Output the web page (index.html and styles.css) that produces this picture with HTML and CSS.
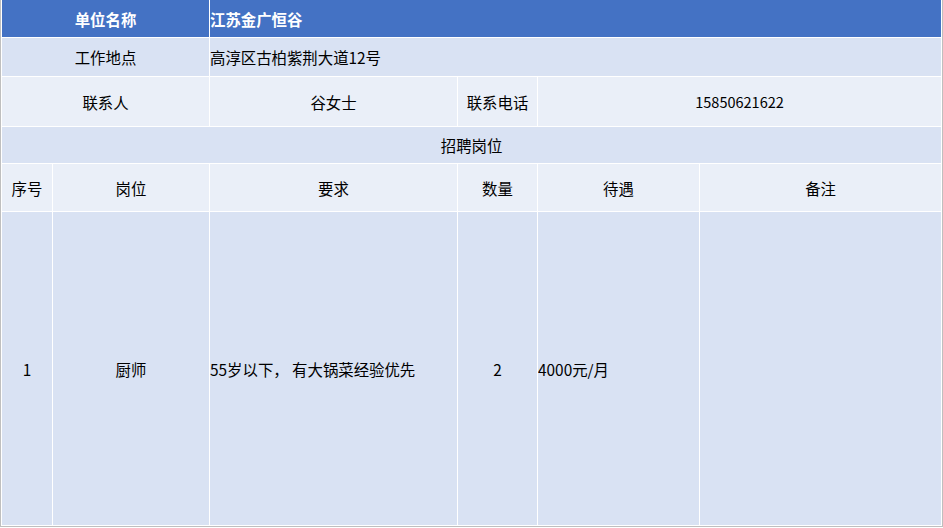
FILE: index.html
```html
<!DOCTYPE html>
<html lang="zh-CN">
<head>
<meta charset="utf-8">
<title>招聘信息</title>
<link rel="stylesheet" href="styles.css">
</head>
<body>
<table class="job">
  <colgroup>
    <col class="c1"><col class="c2"><col class="c3"><col class="c4"><col class="c5"><col class="c6">
  </colgroup>
  <tr class="r1 head">
    <td colspan="2" class="center">单位名称</td>
    <td colspan="4" class="left">江苏金广恒谷</td>
  </tr>
  <tr class="r2 dark">
    <td colspan="2" class="center">工作地点</td>
    <td colspan="4" class="left">高淳区古柏紫荆大道12号</td>
  </tr>
  <tr class="r3 light">
    <td colspan="2" class="center">联系人</td>
    <td class="center">谷女士</td>
    <td class="center">联系电话</td>
    <td colspan="2" class="center num">15850621622</td>
  </tr>
  <tr class="r4 dark">
    <td colspan="6" class="center">招聘岗位</td>
  </tr>
  <tr class="r5 light">
    <td class="center">序号</td>
    <td class="center">岗位</td>
    <td class="center">要求</td>
    <td class="center">数量</td>
    <td class="center">待遇</td>
    <td class="center">备注</td>
  </tr>
  <tr class="r6 dark">
    <td class="center">1</td>
    <td class="center">厨师</td>
    <td class="left">55岁以下，&nbsp;有大锅菜经验优先</td>
    <td class="center">2</td>
    <td class="left">4000元/月</td>
    <td class="center"></td>
  </tr>
</table>
</body>
</html>
```
FILE: styles.css
```css
html, body {
  margin: 0;
  padding: 0;
  background: #ffffff;
}
.job {
  width: 943px;
  table-layout: fixed;
  border-collapse: separate;
  border-spacing: 0;
  border-left: 1px solid #bfbfbf;
  border-right: 1px solid #bfbfbf;
  border-bottom: 1px solid #bfbfbf;
  font-family: "Noto Sans CJK SC", "Noto Sans", sans-serif;
  font-size: 15.4px;
  color: #000;
}
.c1 { width: 51px; }
.c2 { width: 157px; }
.c3 { width: 248px; }
.c4 { width: 80px; }
.c5 { width: 162px; }
.c6 { width: 243px; }
.job td {
  padding: 0;
  border-left: 1px solid #ffffff;
  border-bottom: 1px solid #ffffff;
  vertical-align: middle;
  white-space: nowrap;
  overflow: hidden;
}
.job tr > td:last-child {
  border-right: 1px solid #ffffff;
}
.center { text-align: center; }
.left { text-align: left; }
.num { font-size: 14.5px; }
.r1 { height: 38px; }
.r2 { height: 39px; }
.r3 { height: 50px; }
.r4 { height: 37px; }
.r5 { height: 48px; }
.r6 { height: 314px; }
.head td {
  background: #4472c4;
  color: #ffffff;
  font-weight: bold;
}
.dark td { background: #d9e2f3; }
.light td { background: #eaeff8; }
```
